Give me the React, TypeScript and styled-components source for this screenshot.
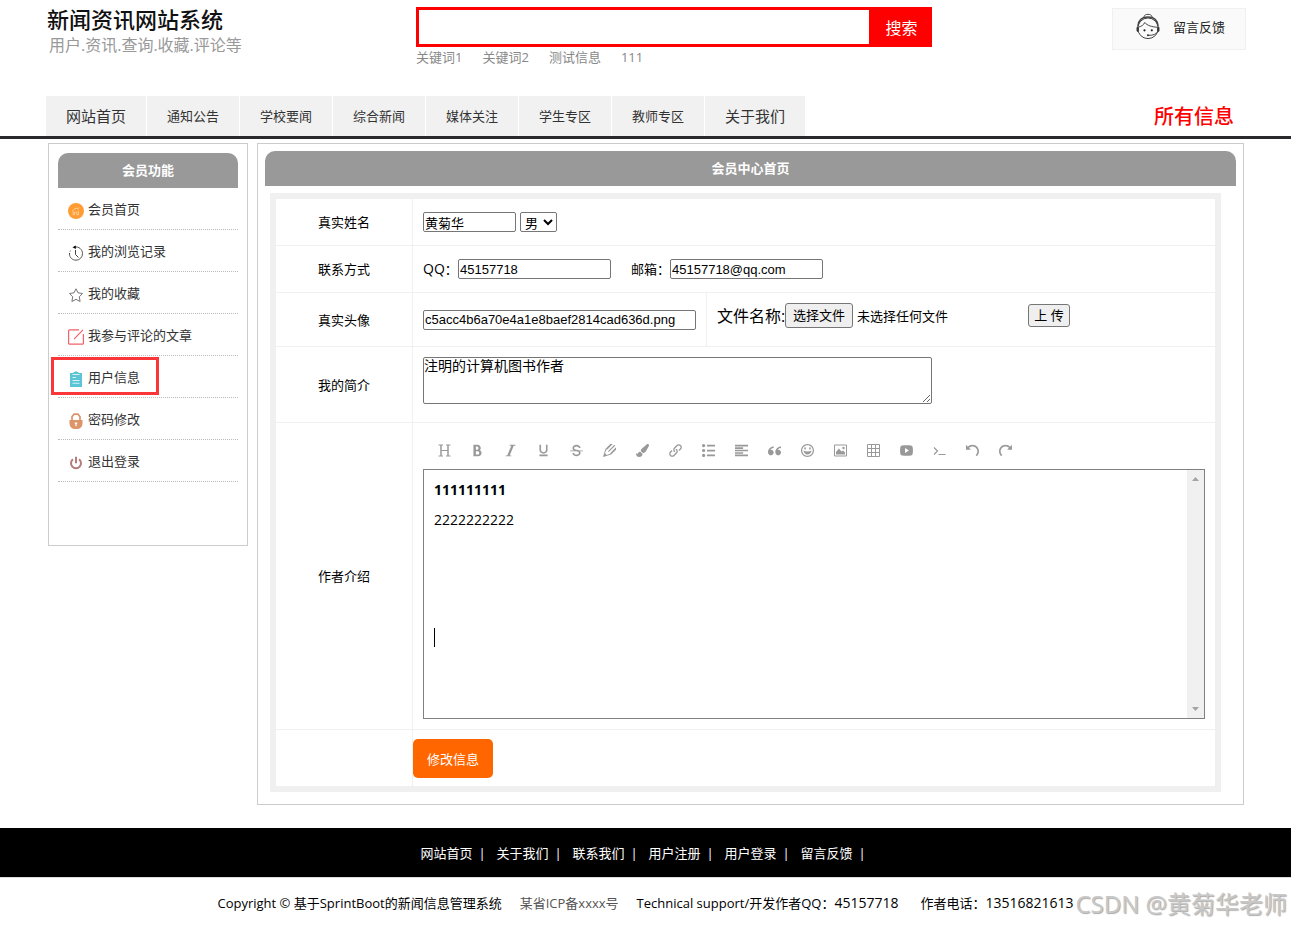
import React, { useRef } from "react";
import styled, { createGlobalStyle } from "styled-components";
import {
  ImBold,
  ImItalic,
  ImUnderline,
  ImStrikethrough,
  ImPencil2,
  ImLink,
  ImParagraphLeft,
  ImQuotesLeft,
  ImHappy,
  ImUndo,
  ImRedo,
} from "react-icons/im";
import { FaPaintBrush } from "react-icons/fa";

const GlobalStyle = createGlobalStyle`
  * { box-sizing: border-box; }
  body {
    margin: 0;
    background: #fff;
    color: #000;
    font: 13px/20px "Open Sans", "Noto Sans CJK SC", sans-serif;
  }
  a { color: inherit; text-decoration: none; }
  h1, h2, p, ul { margin: 0; padding: 0; }
  ul { list-style: none; }
  button, input, select, textarea { font-family: inherit; margin: 0; }
`;

const Page = styled.div`
  position: relative;
  min-height: 100vh;
`;

const Container = styled.div`
  width: 100%;
  max-width: 1201px;
  margin: 0 auto;
  padding-left: 1px;
`;

const Header = styled(Container)`
  display: grid;
  grid-template-columns: 370px 516px 1fr;
  height: 96px;
`;

const Brand = styled.div`
  padding: 5px 0 0 1px;
`;

const SiteName = styled.h1`
  font-size: 22px;
  line-height: 28px;
  font-weight: 500;
  color: #111;
`;

const Slogan = styled.p`
  padding-left: 2px;
  font-size: 16px;
  line-height: 24px;
  color: #999;
`;

const SearchForm = styled.form`
  display: flex;
  height: 40px;
  margin-top: 7px;
`;

const SearchInput = styled.input`
  flex: 1;
  min-width: 0;
  padding: 0 10px;
  border: 3px solid #f00;
  border-right: 0;
  border-radius: 0;
  font-size: 14px;
  outline: none;
`;

const SearchButton = styled.button`
  width: 63px;
  border: 0;
  padding: 0 0 0 2px;
  background: #f00;
  color: #fff;
  font-size: 16px;
`;

const Keywords = styled.nav`
  display: flex;
  gap: 20px;
  color: #888;
`;

const Feedback = styled.a`
  display: flex;
  justify-self: end;
  gap: 12px;
  width: 134px;
  height: 42px;
  margin-top: 8px;
  padding: 4px 0 0 22px;
  border: 1px solid #f0f0f0;
  background: #fafafa;
  color: #222;
  line-height: 28px;
`;

const NavBar = styled.nav`
  border-bottom: 3px solid #2a2a2c;
`;

const NavInner = styled(Container)`
  display: flex;
  gap: 1px;
`;

const NavLink = styled.a<{ $large?: boolean }>`
  padding: 0 20px;
  background: #f1f1f1;
  color: #333;
  font-size: ${(p) => (p.$large ? 15 : 13)}px;
  line-height: 40px;
`;

const AllNews = styled.a`
  margin-left: auto;
  padding: 2px 12px 0 0;
  color: #f00;
  font-size: 20px;
  font-weight: 500;
  line-height: 38px;
`;

const Columns = styled(Container)`
  display: flex;
  align-items: flex-start;
  gap: 9px;
  padding: 4px 2px 23px 3px;
`;

const Sidebar = styled.aside`
  flex: none;
  width: 200px;
  min-height: 403px;
  padding: 9px;
  border: 1px solid #ccc;
`;

const Main = styled.main`
  flex: 1;
  min-width: 0;
  padding: 7px 7px 12px;
  border: 1px solid #ccc;
`;

const PanelTitle = styled.h2`
  border-radius: 10px 10px 0 0;
  background: #999;
  color: #fff;
  font-size: 13px;
  font-weight: 700;
  line-height: 35px;
  text-align: center;
`;

const MenuItem = styled.li`
  position: relative;
  height: 42px;
  border-bottom: 1px dotted #bbb;
`;

const MenuLink = styled.a`
  display: flex;
  align-items: center;
  gap: 4px;
  height: 41px;
  padding-left: 10px;
  color: #333;

  svg { flex: none; margin-top: 4px; }
`;

const Highlight = styled.span`
  position: absolute;
  left: -7px;
  top: 1px;
  width: 108px;
  height: 38px;
  border: 3px solid #fa3639;
  pointer-events: none;
`;

const Form = styled.form`
  margin: 7px 15px 0 5px;
  border: 6px solid #f0f0f0;
`;

const Row = styled.div<{ $height: number }>`
  display: grid;
  grid-template-columns: 137px 1fr;
  min-height: ${(p) => p.$height}px;
  border-bottom: 1px solid #f0f0f0;

  &:last-child { border-bottom: 0; }
`;

const RowLabel = styled.div`
  display: flex;
  align-items: center;
  justify-content: center;
  border-right: 1px solid #f0f0f0;
`;

const Cell = styled.div`
  display: flex;
  align-items: center;
  min-width: 0;
  gap: 4px;
  padding: 0 10px;
`;

const SplitCell = styled.div`
  display: grid;
  grid-template-columns: 294px 1fr;
`;

const AvatarCell = styled(Cell)`
  border-right: 1px solid #f0f0f0;
`;

const UploadCell = styled(Cell)`
  align-items: flex-start;
  padding-top: 10px;
`;

const ActionCell = styled.div`
  padding: 9px 0 8px;
`;

const EditorCell = styled.div`
  min-width: 0;
  padding: 10px;
`;

const TextInput = styled.input<{ $width: number }>`
  width: ${(p) => p.$width}px;
  height: 20px;
  padding: 0 1px;
  border: 1px solid #767676;
  border-radius: 2px;
  background: #fff;
  color: #000;
  font: 13px/18px "Liberation Sans", "Noto Sans CJK SC", sans-serif;
`;

const Select = styled.select`
  width: 37px;
  height: 20px;
  padding: 0 0 1px;
  border: 1px solid #767676;
  border-radius: 2px;
  background: #fff;
  color: #000;
  font-size: 13px;
`;

const Field = styled.label`
  display: flex;
  align-items: center;
  margin-right: 16px;
`;

const FieldName = styled.span<{ $width: number }>`
  width: ${(p) => p.$width}px;
  white-space: nowrap;
`;

const FilePicker = styled.div`
  display: flex;
  align-items: center;
  width: 307px;
  height: 25px;
  white-space: nowrap;
`;

const FileCaption = styled.label`
  width: 68px;
  font-size: 16px;
`;

const GreyButton = styled.button<{ $width: number; $height: number }>`
  width: ${(p) => p.$width}px;
  height: ${(p) => p.$height}px;
  padding: 0 0 1px;
  border: 1px solid #767676;
  border-radius: 3px;
  background: #efefef;
  color: #000;
  font-size: 13px;
  line-height: 20px;
`;

const FileStatus = styled.span`
  margin-left: 4px;
`;

const UploadSlot = styled.div`
  display: flex;
  align-items: center;
  height: 25px;
`;

const Bio = styled.textarea`
  width: 509px;
  height: 47px;
  padding: 0;
  border: 1px solid #767676;
  border-radius: 2px;
  color: #000;
  font-size: 14px;
  line-height: 16px;
  resize: both;
`;

const BioCell = styled(Cell)`
  align-items: flex-start;
  padding-top: 10px;
`;

const Toolbar = styled.div`
  display: flex;
  height: 34px;
  margin-bottom: 2px;
  padding-left: 5px;
`;

const Tool = styled.button`
  display: flex;
  align-items: center;
  justify-content: center;
  width: 33px;
  padding: 0;
  border: 0;
  background: none;
  color: #999;
`;

const EditorFrame = styled.div`
  display: flex;
  height: 250px;
  border: 1px solid #808080;
`;

const EditorText = styled.div`
  flex: 1;
  padding: 10px;
  font-size: 14px;
  outline: none;

  p + p { margin-top: 10px; }
`;

const Caret = styled.span`
  display: block;
  width: 1px;
  height: 19px;
  margin-top: 98px;
  background: #000;
`;

const ScrollTrack = styled.div`
  display: flex;
  flex-direction: column;
  align-items: center;
  justify-content: space-between;
  width: 17px;
  padding: 7px 0;
  background: #f0f0f0;
`;

const SubmitButton = styled.button`
  display: block;
  width: 80px;
  height: 39px;
  padding: 0;
  border: 0;
  border-radius: 5px;
  background: #f60;
  color: #fff;
  font-size: 13px;
`;

const FooterNav = styled.nav`
  display: flex;
  justify-content: center;
  height: 50px;
  border-bottom: 1px solid #ddd;
  background: #000;
  color: #fff;
  line-height: 50px;
`;

const FooterItem = styled.span`
  display: flex;
  gap: 6px;
  padding: 0 8px 0 3px;
`;

const Bar = styled.span`
  width: 7px;
  text-align: center;
`;

const Copyright = styled.footer`
  display: flex;
  justify-content: center;
  gap: 18px;
  padding: 15px 0 14px;
  white-space: nowrap;

  a { color: #555; }
`;

const Digits = styled.span`
  font-size: 14px;
`;

const Phone = styled.span`
  margin-left: 4px;
`;

const Watermark = styled.div`
  position: absolute;
  right: 4px;
  bottom: 6px;
  color: #c8c8c8;
  font-size: 24px;
  line-height: 34px;
  text-shadow: 1px 1px 1px #aaa, -1px -1px 0 #fff;
  white-space: nowrap;
  pointer-events: none;
`;

const AgentIcon = () => (
  <svg width="26" height="28" viewBox="0 0 26 28" fill="none" stroke="#444" strokeWidth="1">
    <path d="M9 3.800C9.200 .5 16.800 .5 17 3.800" />
    <circle cx="13" cy="15.300" r="10.300" />
    <path d="M3 13C3.500 7 7.500 4 13 4S22.500 7 23 13" strokeWidth="1.500" />
    <path d="M3.500 14C6.500 13.500 8.500 12 9.800 9.500C12 12.500 17 14 22.500 14.200" />
    <rect x="2" y="14" width="1.500" height="4.500" rx=".7" fill="#222" />
    <rect x="22.500" y="14" width="1.500" height="4.500" rx=".7" fill="#222" />
    <path d="M22.800 18.500C21.500 21 18 22.500 14 22.300" />
    <circle cx="9.500" cy="17.300" r="1.100" fill="#222" stroke="none" />
    <circle cx="16.800" cy="17.300" r="1.100" fill="#222" stroke="none" />
    <circle cx="13" cy="22.300" r="1" fill="#222" stroke="none" />
  </svg>
);

const HomeIcon = () => (
  <svg width="16" height="16" viewBox="0 0 16 16" fill="none">
    <circle cx="8" cy="8" r="8" fill="#ff9c33" />
    <path d="M4 8l4-3 2 1.200L11 4.300M5.200 8v3.800h1.300V9.300h2.300v2.500h1.600V7.500" stroke="#ffd9a8" strokeWidth=".8" />
  </svg>
);

const HistoryIcon = () => (
  <svg width="16" height="16" viewBox="0 0 16 16" fill="none" stroke="#444">
    <path d="M6 2.200C11 1 14.500 4.500 14.500 8.700A6.500 6.500 0 0 1 8 15.200C4.500 15.200 1.500 12.500 1.500 9" strokeWidth=".9" />
    <path d="M1.500 9C1.500 7.500 2 6 3 4.800" strokeDasharray="1 1.500" />
    <path d="M7.500 5v4.500l3 3" />
    <path d="M4.500 2.300L7.800.5v3.600z" fill="#000" stroke="none" />
  </svg>
);

const StarIcon = () => (
  <svg width="16" height="16" viewBox="0 0 16 16" fill="none" stroke="#666" strokeWidth=".9" strokeLinejoin="round">
    <path d="M8 1.800l2 4 4.500.7-3.200 3.300.8 4.700L8 12.300l-4.100 2.200.8-4.700L1.500 6.500 6 5.800z" />
  </svg>
);

const ComposeIcon = () => (
  <svg width="16" height="16" viewBox="0 0 16 16" fill="none" stroke="#f2606a" strokeWidth="1.200">
    <path d="M11 .8H1.600a1 1 0 0 0-1 1v12.400a1 1 0 0 0 1 1h12.800a1 1 0 0 0 1-1V5M6 10.200L15 .8" />
  </svg>
);

const ClipboardIcon = () => (
  <svg width="16" height="16" viewBox="0 0 16 16">
    <path d="M2 2h3.500V1h1.300a1.300 1.300 0 0 1 2.400 0h1.300v1H14v14H2z" fill="#5bc5d6" />
    <path d="M4.500 3.500h7M4.500 6.500H8M4.500 9.500h7M4.500 12.300h7" stroke="#d6f2f6" strokeWidth="1.100" />
  </svg>
);

const LockIcon = () => (
  <svg width="16" height="16" viewBox="0 0 16 16" fill="none">
    <path d="M4 8V3.800L6 1.200h4l2 2.600V8" stroke="#dd9468" strokeWidth="1.700" />
    <path d="M1.500 7h13v3.500a5.500 5.500 0 0 1-5.500 5.500H7a5.500 5.500 0 0 1-5.500-5.500z" fill="#dd9468" />
    <path d="M6.800 9.500h2.400v1.500H8.600v2.200H7.400V11h-.6z" fill="#fff" />
  </svg>
);

const PowerIcon = () => (
  <svg width="16" height="16" viewBox="0 0 16 16" fill="none" stroke="#b57c7c" strokeWidth="2">
    <path d="M8 1.800v6.500M5 4.200a5 5 0 1 0 6 0" />
  </svg>
);

const HeadingIcon = () => (
  <svg width="13" height="13" viewBox="0 0 13 13" fill="none" stroke="currentColor">
    <path d="M.5 1h4.500M8 1h4.500M.5 12h4.500M8 12h4.500M3 6.500h7" />
    <path d="M3 1v11M10 1v11" strokeWidth="1.500" />
  </svg>
);

const ListIcon = () => (
  <svg width="13" height="13" viewBox="0 0 13 13" fill="currentColor">
    <circle cx="1.600" cy="1.600" r="1.600" />
    <circle cx="1.600" cy="6.500" r="1.600" />
    <circle cx="1.600" cy="11.400" r="1.600" />
    <path d="M5 .8h8v1.700H5zM5 5.700h8v1.700H5zM5 10.600h8v1.700H5z" />
  </svg>
);

const PictureIcon = () => (
  <svg width="13" height="13" viewBox="0 0 13 13" fill="currentColor">
    <path d="M.5 1h12v11H.5z" fill="none" stroke="currentColor" />
    <path d="M2 10.500V8l3-3.500L7.500 7.500 9 6.500l2 2v2z" />
    <circle cx="9.500" cy="4" r="1.200" />
  </svg>
);

const GridIcon = () => (
  <svg width="13" height="13" viewBox="0 0 13 13" fill="none" stroke="currentColor">
    <path d="M.5.5h12v12H.5zM.5 4.500h12M.5 8.500h12M4.500.5v12M8.500.5v12" />
  </svg>
);

const VideoIcon = () => (
  <svg width="13" height="13" viewBox="0 0 13 13" fill="currentColor">
    <path fillRule="evenodd" d="M2 1.500C5 1.200 8 1.200 11 1.500Q12.500 1.700 12.700 3.500 13.200 6.500 12.700 9.500 12.500 11.300 11 11.500 6.500 12 2 11.500.500 11.300.300 9.500-.200 6.500.300 3.500.500 1.700 2 1.500zM5 4v5l4-2.500z" />
  </svg>
);

const TerminalIcon = () => (
  <svg width="13" height="13" viewBox="0 0 13 13" fill="none" stroke="currentColor" strokeWidth="1.200">
    <path d="M1 3.500l3.500 3.500L1 10.500M5.500 10.500h7" />
  </svg>
);

const tools: [string, React.ReactNode][] = [
  ["标题", <HeadingIcon />],
  ["粗体", <ImBold size={13} />],
  ["斜体", <ImItalic size={13} />],
  ["下划线", <ImUnderline size={13} />],
  ["删除线", <ImStrikethrough size={13} />],
  ["文字颜色", <ImPencil2 size={13} />],
  ["背景色", <FaPaintBrush size={13} />],
  ["链接", <ImLink size={13} />],
  ["列表", <ListIcon />],
  ["对齐", <ImParagraphLeft size={13} />],
  ["引用", <ImQuotesLeft size={13} />],
  ["表情", <ImHappy size={13} />],
  ["图片", <PictureIcon />],
  ["表格", <GridIcon />],
  ["视频", <VideoIcon />],
  ["代码", <TerminalIcon />],
  ["撤销", <ImUndo size={13} />],
  ["重做", <ImRedo size={13} />],
];

const menu: [string, React.ReactNode][] = [
  ["会员首页", <HomeIcon />],
  ["我的浏览记录", <HistoryIcon />],
  ["我的收藏", <StarIcon />],
  ["我参与评论的文章", <ComposeIcon />],
  ["用户信息", <ClipboardIcon />],
  ["密码修改", <LockIcon />],
  ["退出登录", <PowerIcon />],
];

const channels = ["网站首页", "通知公告", "学校要闻", "综合新闻", "媒体关注", "学生专区", "教师专区", "关于我们"];
const footerLinks = ["网站首页", "关于我们", "联系我们", "用户注册", "用户登录", "留言反馈"];

export default function App() {
  const fileRef = useRef<HTMLInputElement>(null);

  return (
    <Page>
      <GlobalStyle />
      <Header as="header">
        <Brand>
          <SiteName>新闻资讯网站系统</SiteName>
          <Slogan>用户.资讯.查询.收藏.评论等</Slogan>
        </Brand>
        <div>
          <SearchForm onSubmit={(e) => e.preventDefault()}>
            <SearchInput type="text" aria-label="搜索" />
            <SearchButton type="submit">搜索</SearchButton>
          </SearchForm>
          <Keywords>
            {["关键词1", "关键词2", "测试信息", "111"].map((k) => (
              <a href="#" key={k}>{k}</a>
            ))}
          </Keywords>
        </div>
        <Feedback href="#">
          <AgentIcon />
          留言反馈
        </Feedback>
      </Header>

      <NavBar>
        <NavInner>
          {channels.map((c, i) => (
            <NavLink href="#" key={c} $large={i === 0 || i === channels.length - 1}>{c}</NavLink>
          ))}
          <AllNews href="#">所有信息</AllNews>
        </NavInner>
      </NavBar>

      <Columns>
        <Sidebar>
          <PanelTitle>会员功能</PanelTitle>
          <ul>
            {menu.map(([name, icon]) => (
              <MenuItem key={name}>
                <MenuLink href="#">{icon}{name}</MenuLink>
                {name === "用户信息" && <Highlight />}
              </MenuItem>
            ))}
          </ul>
        </Sidebar>

        <Main>
          <PanelTitle>会员中心首页</PanelTitle>
          <Form onSubmit={(e) => e.preventDefault()}>
            <Row $height={47}>
              <RowLabel><label htmlFor="realname">真实姓名</label></RowLabel>
              <Cell>
                <TextInput id="realname" type="text" $width={93} defaultValue="黄菊华" />
                <Select aria-label="性别" defaultValue="男">
                  <option>男</option>
                  <option>女</option>
                </Select>
              </Cell>
            </Row>
            <Row $height={47}>
              <RowLabel>联系方式</RowLabel>
              <Cell>
                <Field>
                  <FieldName $width={35}><Digits>QQ</Digits>：</FieldName>
                  <TextInput type="text" $width={153} defaultValue="45157718" />
                </Field>
                <Field>
                  <FieldName $width={39}>邮箱：</FieldName>
                  <TextInput type="text" $width={153} defaultValue="45157718@qq.com" />
                </Field>
              </Cell>
            </Row>
            <Row $height={54}>
              <RowLabel><label htmlFor="avatar">真实头像</label></RowLabel>
              <SplitCell>
                <AvatarCell>
                  <TextInput id="avatar" type="text" $width={273} defaultValue="c5acc4b6a70e4a1e8baef2814cad636d.png" />
                </AvatarCell>
                <UploadCell>
                  <FilePicker>
                    <FileCaption htmlFor="file">文件名称:</FileCaption>
                    <input id="file" ref={fileRef} type="file" hidden />
                    <GreyButton type="button" $width={68} $height={25} onClick={() => fileRef.current?.click()}>
                      选择文件
                    </GreyButton>
                    <FileStatus>未选择任何文件</FileStatus>
                  </FilePicker>
                  <UploadSlot>
                    <GreyButton type="button" $width={42} $height={23}>上 传</GreyButton>
                  </UploadSlot>
                </UploadCell>
              </SplitCell>
            </Row>
            <Row $height={76}>
              <RowLabel><label htmlFor="bio">我的简介</label></RowLabel>
              <BioCell>
                <Bio id="bio" defaultValue="注明的计算机图书作者" />
              </BioCell>
            </Row>
            <Row $height={307}>
              <RowLabel>作者介绍</RowLabel>
              <EditorCell>
                <Toolbar>
                  {tools.map(([name, icon]) => (
                    <Tool type="button" key={name} aria-label={name}>{icon}</Tool>
                  ))}
                </Toolbar>
                <EditorFrame>
                  <EditorText role="textbox" aria-label="作者介绍" contentEditable suppressContentEditableWarning>
                    <p><b>111111111</b></p>
                    <p>2222222222</p>
                    <Caret />
                  </EditorText>
                  <ScrollTrack>
                    <svg width="7" height="4" fill="#a3a3a3"><path d="M0 4L3.500 0 7 4z" /></svg>
                    <svg width="7" height="4" fill="#a3a3a3"><path d="M0 0h7L3.500 4z" /></svg>
                  </ScrollTrack>
                </EditorFrame>
              </EditorCell>
            </Row>
            <Row $height={56}>
              <RowLabel />
              <ActionCell>
                <SubmitButton type="submit">修改信息</SubmitButton>
              </ActionCell>
            </Row>
          </Form>
        </Main>
      </Columns>

      <FooterNav>
        {footerLinks.map((name) => (
          <FooterItem key={name}>
            <a href="#">{name}</a>
            <Bar>|</Bar>
          </FooterItem>
        ))}
      </FooterNav>
      <Copyright>
        <span>Copyright © 基于SprintBoot的新闻信息管理系统</span>
        <a href="#">某省ICP备xxxx号</a>
        <span>Technical support/开发作者QQ：<Digits>45157718</Digits></span>
        <Phone>作者电话：<Digits>13516821613</Digits></Phone>
      </Copyright>
      <Watermark>CSDN @黄菊华老师</Watermark>
    </Page>
  );
}
